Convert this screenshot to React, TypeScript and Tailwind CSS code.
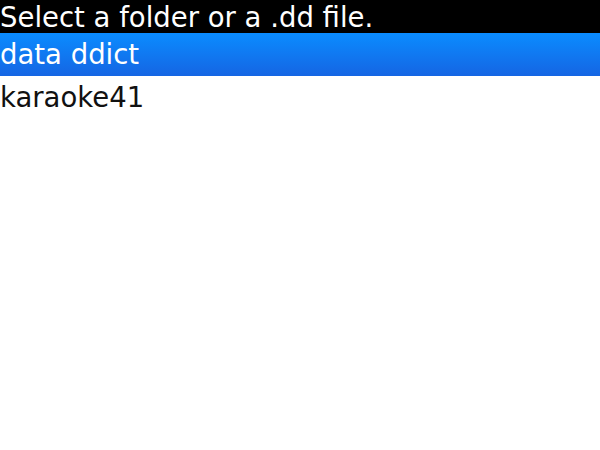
const items = ["data ddict", "karaoke41"];

export default function App() {
  return (
    <div className="w-[600px] h-[450px] bg-white overflow-hidden font-['DejaVu_Sans',sans-serif]">
      <div className="h-[33px] bg-black text-white text-[27.5px] leading-[34px] whitespace-nowrap">
        Select a folder or a .dd file.
      </div>
      {items.map((name, i) => (
        <div
          key={name}
          className={
            i === 0
              ? "h-[43px] leading-[43px] text-[27.5px] bg-gradient-to-b from-[#0a8cff] to-[#1565e3] text-white"
              : "h-[43px] leading-[43px] text-[27.5px] text-[#111]"
          }
        >
          {name}
        </div>
      ))}
    </div>
  );
}
